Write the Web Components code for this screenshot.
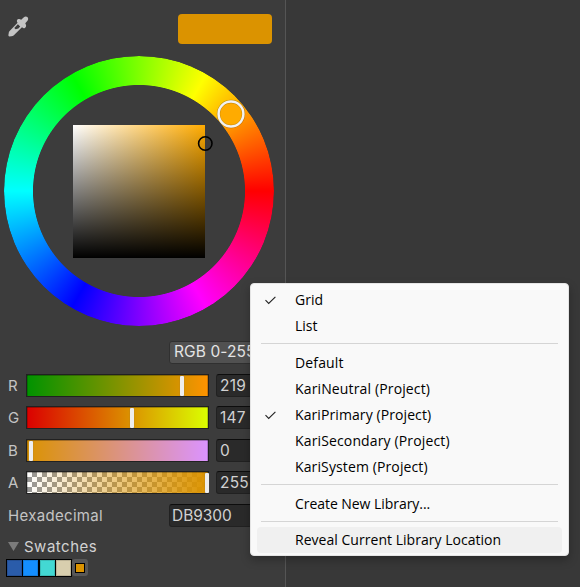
<!DOCTYPE html>
<html lang="en">
<head>
<meta charset="utf-8">
<title>Color picker</title>
<style>
html,body{margin:0;height:100%;overflow:hidden}
body{background:#383838;font-family:Inter,"Liberation Sans",sans-serif;position:relative}
context-menu{position:absolute;left:250px;top:283px}
</style>
</head>
<body>
<color-panel>
  <color-wheel></color-wheel>
  <mode-button>RGB 0-255</mode-button>
  <channel-row label="R" value="219" pos="152.5" track="linear-gradient(90deg,#009300,#ff9300)"></channel-row>
  <channel-row label="G" value="147" pos="102.5" track="linear-gradient(90deg,#db0000,#dbff00)"></channel-row>
  <channel-row label="B" value="0" pos="1.5" track="linear-gradient(90deg,#db9300,#db93ff)"></channel-row>
  <channel-row label="A" value="255" pos="177.5" track="linear-gradient(90deg,#db930000,#db9300),repeating-conic-gradient(#fff 0 25%,#999 0 50%) 5px 0/10px 10px"></channel-row>
  <hex-row>DB9300</hex-row>
  <swatch-list>Swatches</swatch-list>
</color-panel>
<context-menu>
  <menu-item checked>Grid</menu-item>
  <menu-item>List</menu-item>
  <menu-line></menu-line>
  <menu-item spacing=".14">Default</menu-item>
  <menu-item spacing=".14">KariNeutral (Project)</menu-item>
  <menu-item spacing=".09" checked>KariPrimary (Project)</menu-item>
  <menu-item spacing=".14">KariSecondary (Project)</menu-item>
  <menu-item spacing=".12">KariSystem (Project)</menu-item>
  <menu-line></menu-line>
  <menu-item spacing="-.05">Create New Library...</menu-item>
  <menu-line></menu-line>
  <menu-item spacing=".03" active>Reveal Current Library Location</menu-item>
</context-menu>
<script>
function define(name, render) {
  customElements.define(name, class extends HTMLElement {
    constructor() {
      super();
      this.attachShadow({mode: 'open'}).innerHTML = render(this);
    }
  });
}

define('color-panel', () => `<style>
:host{display:flex;flex-direction:column;box-sizing:border-box;width:286px;height:587px;background:#3c3c3c;border-right:1px solid #555;color:#c4c4c4;font-size:15.5px;letter-spacing:.3px;overflow:hidden}
header{display:flex;justify-content:space-between;align-items:flex-start;height:42px;padding:14px 13px 0 8px;flex:none}
svg{margin-top:2px}
.current{width:94px;height:30px;border-radius:4px;background:#db9300}
</style>
<header>
<svg width="21" height="21" viewBox="0 0 21 21"><g fill="#c4c4c4"><path fill-rule="evenodd" d="M10.8 5.6 15.2 10 5.6 19.4Q4.6 20.3 3.2 20.2L1.4 20.5Q.2 20.3.4 19.1L.7 17.2Q.7 16 1.6 15.1ZM9.9 8.3 6.3 11.9 7.6 13.2 10.4 12.6 12.2 10.6Z"/><path d="M9 4.2Q9.7 2.5 11.4 3L13.2 3.8 15.6 1.4Q17.6-.2 19.4 1 20.9 2.7 19.5 4.8L17.3 7.3 18 9.1Q18.4 10.9 16.9 11.9 15.4 12.5 14.4 11.5L9.4 6.4Q8.6 5.5 9 4.2Z"/></g></svg>
<div class="current"></div>
</header><slot></slot>`);

define('color-wheel', () => `<style>
:host{display:grid;place-items:center;position:relative;width:270px;height:270px;margin-left:4px;flex:none}
.ring,.field{grid-area:1/1}
.ring{width:270px;height:270px;border-radius:50%;background:conic-gradient(from 90deg,#f00,#f0f,#00f,#0ff,#0f0,#ff0,#f00);-webkit-mask:radial-gradient(circle closest-side,#0000 105.6px,#000 106.4px)}
.field{width:132px;height:133px;background:linear-gradient(#0000,#000),linear-gradient(90deg,#fff,#ffab00)}
.marks{position:absolute;inset:0}
</style><div class="ring"></div><div class="field"></div>
<svg class="marks" width="270" height="270" viewBox="0 0 270 270"><circle cx="227" cy="58" r="12.5" fill="#ffab00" stroke="#0004" stroke-width="3.4"/><circle cx="227" cy="58" r="12.4" fill="none" stroke="#f2f2f2" stroke-width="2.5"/><circle cx="201.3" cy="87.5" r="6.7" fill="none" stroke="#000" stroke-width="1.6"/></svg>`);

define('mode-button', () => `<style>
:host{display:block;box-sizing:border-box;margin:15px 13px 10px 169px;height:23px;flex:none;border:1px solid #303030;border-radius:3px;background:#515151;color:#e4e4e4;padding-left:4px;line-height:20px;white-space:nowrap;letter-spacing:.1px}
</style><slot></slot>`);

define('channel-row', el => `<style>
:host{display:flex;align-items:center;height:23px;margin-bottom:9.4px;flex:none}
.label{width:18px;padding-left:8px;font-size:15px}
.track{position:relative;box-sizing:border-box;width:183px;height:23px;border:1px solid #212121;background:${el.getAttribute('track')};box-shadow:inset 0 1px #0004,inset 1px 0 #0003,inset -1px 0 #0003}
.thumb{position:absolute;top:1px;left:${el.getAttribute('pos')}px;width:4px;height:20px;border-radius:1px;background:#eee;box-shadow:0 0 1px #666}
.value{box-sizing:border-box;margin-left:7px;width:57px;height:23px;border:1px solid #212121;border-top-color:#0d0d0d;border-radius:3px;background:#2a2a2a;color:#d2d2d2;padding-left:3px;line-height:22px;letter-spacing:.2px}
</style><span class="label">${el.getAttribute('label')}</span><div class="track"><div class="thumb"></div></div><div class="value">${el.getAttribute('value')}</div>`);

define('hex-row', () => `<style>
:host{display:flex;align-items:center;height:23px;padding-left:8px;flex:none}
.label{width:161px;font-size:15px;letter-spacing:.32px}
.value{box-sizing:border-box;width:104px;height:23px;border:1px solid #212121;border-top-color:#0d0d0d;border-radius:3px;background:#2a2a2a;color:#d2d2d2;padding-left:2px;line-height:22px;letter-spacing:-.05px}
</style><span class="label">Hexadecimal</span><div class="value"><slot></slot></div>`);

define('swatch-list', () => `<style>
:host{display:block;padding:9px 0 0 6px;flex:none}
.title{display:flex;align-items:center;height:22px;gap:5px;padding-left:2px;color:#d2d2d2;font-size:15px;letter-spacing:.5px}
.row{display:flex;margin-top:1.8px;height:18px}
.row i{box-sizing:border-box;width:17px;height:18px;margin-right:-.6px;border:1px solid #000;box-shadow:inset 0 0 0 1px #0002}
.add{display:grid;place-items:center;width:16px;height:17px;border-radius:3px;background:#585858}
.add b{box-sizing:border-box;width:10px;height:10px;border:1px solid #000;background:#db9300}
</style>
<div class="title"><svg width="11" height="9" viewBox="0 0 11 9"><path fill="#7b7b7b" d="M0 0h11L5.5 9z"/></svg><slot></slot></div>
<div class="row"><i style="background:#2a5caa"></i><i style="background:#148eff"></i><i style="background:#43d8d3"></i><i style="background:#d8ceae"></i><div class="add"><b></b></div></div>`);

define('context-menu', () => `<style>
:host{display:block;box-sizing:border-box;width:319px;height:273px;padding:3px 6px 0;border:1px solid #e4e4e4;border-radius:4px;background:#f9f9f9;box-shadow:0 4px 10px #0004;color:#000;font-family:"Open Sans","Noto Sans",sans-serif;font-size:14px}
</style><slot></slot>`);

define('menu-item', el => `<style>
:host{display:flex;align-items:center;height:26px;border-radius:4px;line-height:26px;white-space:nowrap;letter-spacing:${el.getAttribute('spacing') || 0}px}
:host([active]){background:#f0f0f0;margin-top:-1px;line-height:28px}
.mark{display:flex;width:30px;padding-left:8px}
</style><span class="mark">${el.hasAttribute('checked') ? '<svg width="11" height="9" viewBox="0 0 11 9"><path fill="none" stroke="#222" stroke-width="1.1" d="M.5 4.2 3.7 7.4 10.4.8"/></svg>' : ''}</span><span class="text"><slot></slot></span>`);

define('menu-line', () => `<style>
:host{display:block;padding:4px 4px 6px}
div{height:1px;background:#d5d5d5}
</style><div></div>`);
</script>
</body>
</html>
